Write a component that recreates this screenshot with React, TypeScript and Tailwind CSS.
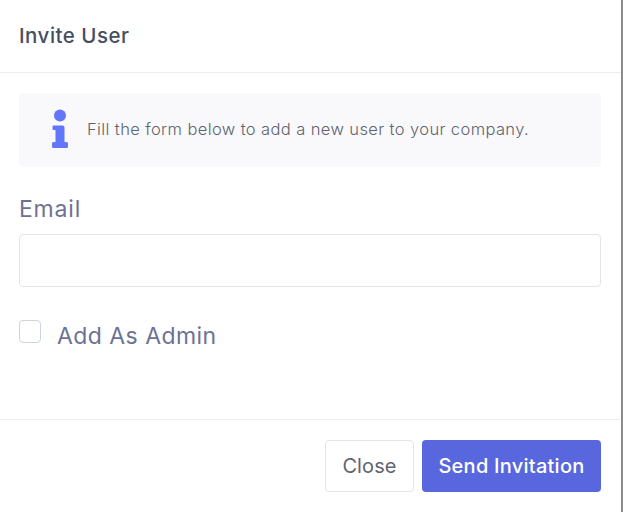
export default function App() {
  return (
    <div className="h-[512px] w-[623px] overflow-hidden bg-white font-['Inter',sans-serif]">
      <div className="h-[512px] w-[623px] border-r-2 border-r-[#8a8a90] bg-white">
        <div className="flex h-[73px] items-center border-b border-[#ebedf3] px-[19px]">
          <h5 className="text-[20.5px] font-medium tracking-[0.5px] text-[#464e5f]">Invite User</h5>
        </div>

        <div className="h-[347px] border-b border-[#ebedf3] px-[19px] pt-5">
          <div className="flex h-[74px] w-[582px] items-center rounded bg-[#f9f9fc] pb-[2px] pl-[33px]">
            <svg className="h-[40px] w-[16px] shrink-0" viewBox="0 0 16 40" fill="#6176fb">
              <circle cx="8" cy="6.5" r="6" />
              <path d="M1.5 16.500h9a2 2 0 0 1 2 2v14.500h2a1.500 1.500 0 0 1 1.500 1.500v3a1.500 1.500 0 0 1-1.500 1.500H1.500A1.500 1.500 0 0 1 0 37.500v-3A1.500 1.500 0 0 1 1.500 33h2V21h-2a1 1 0 0 1-1-1v-2.500a1 1 0 0 1 1-1z" />
            </svg>
            <p className="ml-[19px] text-[16.5px] font-light tracking-[0.39px] text-[#5f6370]">Fill the form below to add a new user to your company.</p>
          </div>

          <div className="mt-[27px]">
            <label className="block text-[23px] leading-[30px] tracking-[0.8px] text-[#6c7293]">Email</label>
            <input type="text" className="mt-[10px] block h-[53px] w-[582px] rounded border border-[#e2e5ec] bg-white px-4 outline-none" />
          </div>

          <div className="mt-[33px] flex items-start">
            <input type="checkbox" className="h-[23px] w-[22px] appearance-none rounded border border-[#cdd3e0] bg-white" />
            <label className="ml-4 mt-[1px] text-[23px] leading-[30px] tracking-[0.45px] text-[#6c7293]">Add As Admin</label>
          </div>
        </div>

        <div className="flex justify-end gap-2 px-5 pt-5">
          <button className="h-[52px] w-[89px] rounded border border-[#e2e5ec] bg-white text-[20px] tracking-[0.1px] text-[#5f6470]">Close</button>
          <button className="h-[52px] w-[179px] rounded bg-[#5867dd] text-[20px] font-medium tracking-[0.25px] text-white">Send Invitation</button>
        </div>
      </div>
    </div>
  );
}
